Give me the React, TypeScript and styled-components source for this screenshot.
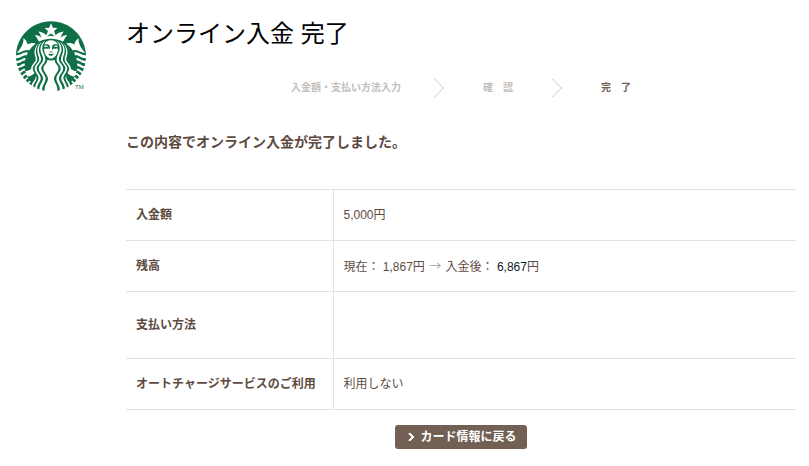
import React from 'react';
import styled, { createGlobalStyle } from 'styled-components';
import { SiStarbucks } from 'react-icons/si';

const GlobalStyle = createGlobalStyle`
  * { box-sizing: border-box; }
  body {
    margin: 0;
    background: #fff;
    color: #5e4b3f;
    font: 12px/18px "Liberation Sans", "Noto Sans CJK JP", sans-serif;
  }
`;

const Page = styled.div`
  display: flex;
  align-items: flex-start;
  gap: 38px;
  padding: 16px 13px 16px 16px;
`;

const Logo = styled.a`
  display: flex;
  align-items: flex-end;
  flex: none;
  width: 72px;
  margin-top: 5px;
  color: #0f7047;
  text-decoration: none;
`;

const Emblem = styled(SiStarbucks)`
  flex: none;
  width: 70px;
  height: 70px;
`;

const Trademark = styled.span`
  margin-left: -11px;
  font-size: 6px;
  line-height: 8px;
`;

const Main = styled.main`
  flex: 1;
  min-width: 0;
`;

const Title = styled.h1`
  margin: 0;
  color: #000;
  font-size: 24px;
  font-weight: 400;
  line-height: 36px;
`;

const Steps = styled.ol`
  display: flex;
  justify-content: center;
  align-items: center;
  gap: 38px;
  height: 20px;
  margin: 26px 0 0;
  padding: 0;
  list-style: none;
  font-size: 10px;
`;

const Step = styled.li<{ $current?: boolean; $wide?: boolean }>`
  display: flex;
  align-items: center;
  gap: ${(p) => (p.$wide ? 32 : 38)}px;
  color: ${(p) => (p.$current ? '#6f5f55' : '#c4beb9')};
  font-weight: 700;
`;

const StepArrow = styled.svg`
  width: 12px;
  height: 20px;
  fill: none;
  stroke: #c9c5c1;
`;

const Message = styled.h2`
  margin: 34px 0 36px;
  font-size: 14px;
  line-height: 21px;
`;

const Details = styled.table`
  width: 100%;
  border-collapse: collapse;
  border-top: 1px solid #e2e2e2;
`;

const Row = styled.tr<{ $tall?: boolean }>`
  height: ${(p) => (p.$tall ? 67 : 51)}px;
  border-bottom: 1px solid #e2e2e2;
`;

const Label = styled.th`
  width: 207px;
  padding: 0 0 0 10px;
  border-right: 1px solid #e2e2e2;
  text-align: left;
  white-space: nowrap;
`;

const Value = styled.td`
  padding: 0 10px;
`;

const Arrow = styled.span`
  margin: 0 1px;
  color: #a39c97;
  font-family: "Noto Sans CJK JP", sans-serif;
`;

const NewAmount = styled.span`
  color: #0b2229;
`;

const Actions = styled.div`
  display: flex;
  justify-content: center;
  margin-top: 15px;
`;

const BackButton = styled.button`
  display: flex;
  align-items: center;
  gap: 6px;
  height: 24px;
  padding: 0 10px 0 13px;
  border: 0;
  border-radius: 3px;
  background: #716053;
  color: #fff;
  font: inherit;
  font-weight: 700;
  cursor: pointer;
`;

const ButtonIcon = styled.svg`
  width: 6px;
  height: 8px;
  fill: none;
  stroke: #fff;
  stroke-width: 2;
`;

const Chevron = () => (
  <StepArrow viewBox="0 0 12 20" aria-hidden="true">
    <path d="M1 .5 10.500 10 1 19.500" />
  </StepArrow>
);

export default function App() {
  return (
    <>
      <GlobalStyle />
      <Page lang="ja">
        <Logo href="#" aria-label="Starbucks">
          <Emblem aria-hidden="true" />
          <Trademark>TM</Trademark>
        </Logo>
        <Main>
          <Title>オンライン入金 完了</Title>
          <Steps>
            <Step $wide>入金額・支払い方法入力<Chevron /></Step>
            <Step>確　認<Chevron /></Step>
            <Step $current aria-current="step">完　了</Step>
          </Steps>
          <Message>この内容でオンライン入金が完了しました。</Message>
          <Details>
            <tbody>
              <Row>
                <Label scope="row">入金額</Label>
                <Value>5,000円</Value>
              </Row>
              <Row>
                <Label scope="row">残高</Label>
                <Value>
                  現在： 1,867円 <Arrow>→</Arrow> 入金後： <NewAmount>6,867</NewAmount>円
                </Value>
              </Row>
              <Row $tall>
                <Label scope="row">支払い方法</Label>
                <Value />
              </Row>
              <Row>
                <Label scope="row">オートチャージサービスのご利用</Label>
                <Value>利用しない</Value>
              </Row>
            </tbody>
          </Details>
          <Actions>
            <BackButton type="button">
              <ButtonIcon viewBox="0 0 6 8" aria-hidden="true">
                <path d="M1 0 5 4 1 8" />
              </ButtonIcon>
              カード情報に戻る
            </BackButton>
          </Actions>
        </Main>
      </Page>
    </>
  );
}
